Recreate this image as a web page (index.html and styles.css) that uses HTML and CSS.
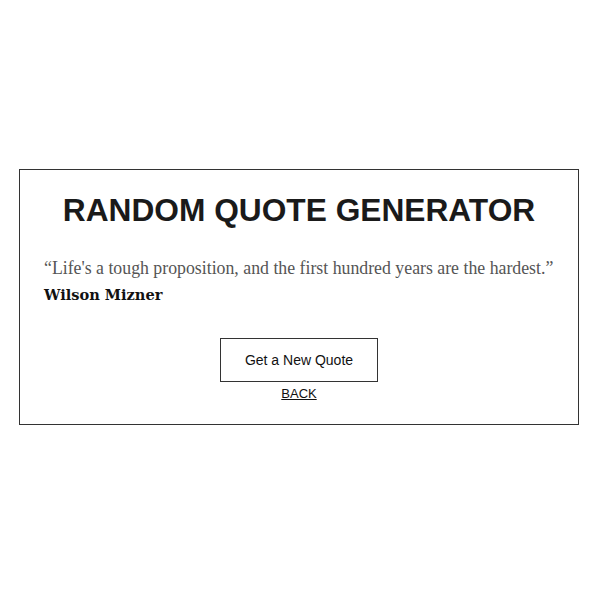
FILE: index.html
```html
<!DOCTYPE html>
<html>
<head>
<meta charset="utf-8">
<link rel="stylesheet" href="styles.css">
</head>
<body>
<main class="card">
  <h1 class="title">RANDOM QUOTE GENERATOR</h1>
  <p class="quote">“Life's a tough proposition, and the first hundred years are the hardest.”</p>
  <p class="author">Wilson Mizner</p>
  <div class="actions">
    <button class="btn">Get a New Quote</button>
    <a class="back" href="#">BACK</a>
  </div>
</main>
</body>
</html>
```
FILE: styles.css
```css
html, body { margin: 0; padding: 0; background: #fff; }
body {
  box-sizing: border-box;
  min-height: 600px;
  padding-bottom: 6px;
  display: flex;
  align-items: center;
  justify-content: center;
}
.card {
  box-sizing: border-box;
  width: 560px;
  height: 256px;
  margin-left: -2px;
  border: 1px solid #333;
  padding: 20px 24px 0 24px;
}
.title {
  margin: 0;
  text-align: center;
  font-family: "Liberation Sans", Arial, sans-serif;
  font-weight: bold;
  font-size: 31.7px;
  line-height: 40px;
  color: #1a1a1a;
}
.quote {
  margin: 27px 0 0 0;
  font-family: "Liberation Serif", "DejaVu Serif", serif;
  font-size: 17.8px;
  line-height: 22px;
  color: #555;
  white-space: nowrap;
}
.author {
  margin: 5px 0 0 0;
  font-family: "DejaVu Serif", serif;
  font-weight: bold;
  font-size: 14.6px;
  line-height: 22px;
  color: #111;
}
.actions {
  margin-top: 32px;
  display: flex;
  flex-direction: column;
  align-items: center;
}
.btn {
  box-sizing: border-box;
  width: 158px;
  height: 44px;
  background: #fff;
  border: 1px solid #333;
  font-family: "Liberation Sans", Arial, sans-serif;
  font-size: 14px;
  color: #111;
}
.back {
  margin-top: 4px;
  font-family: "Liberation Sans", Arial, sans-serif;
  font-size: 13px;
  line-height: 16px;
  color: #111;
}
```
